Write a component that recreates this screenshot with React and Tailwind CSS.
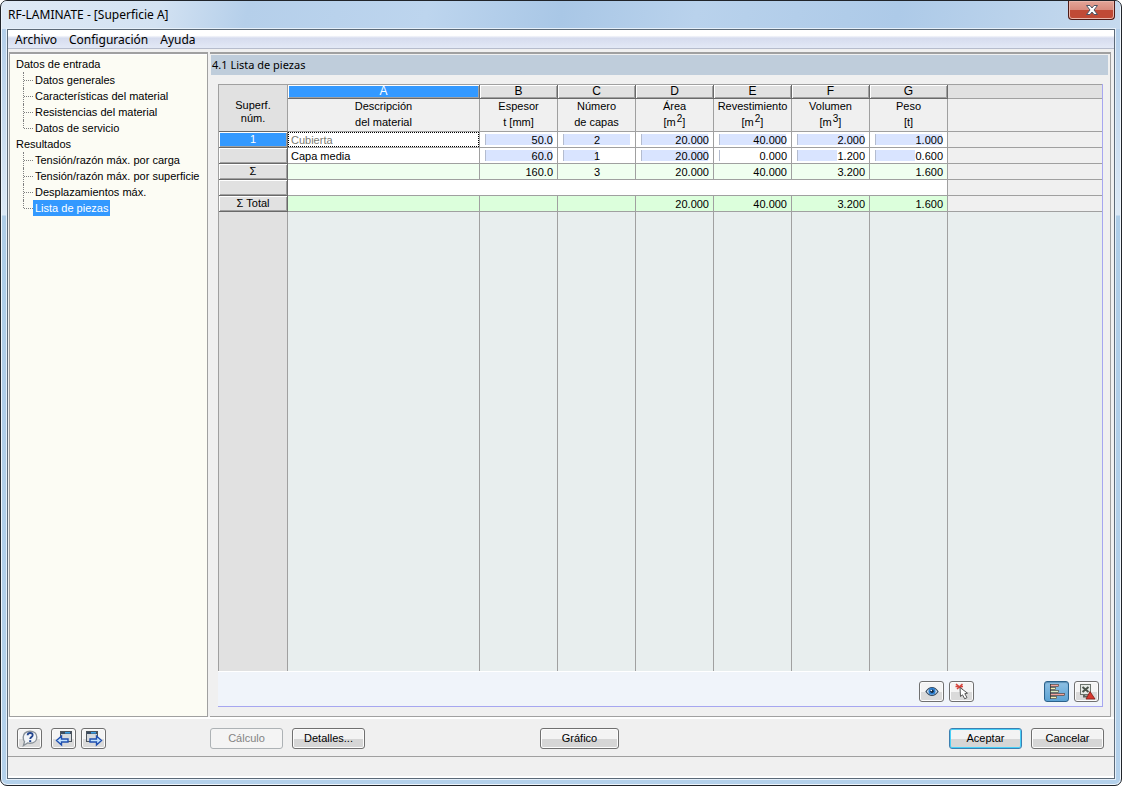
import React, { useState } from 'react';
import { clsx } from 'clsx';

const TREE = [
  {
    title: 'Datos de entrada',
    items: ['Datos generales', 'Características del material', 'Resistencias del material', 'Datos de servicio'],
  },
  {
    title: 'Resultados',
    items: [
      'Tensión/razón máx. por carga',
      'Tensión/razón máx. por superficie',
      'Desplazamientos máx.',
      'Lista de piezas',
    ],
  },
];

const COLUMNS = [
  { letter: 'A', top: 'Descripción', bottom: 'del material' },
  { letter: 'B', top: 'Espesor', bottom: 't [mm]' },
  { letter: 'C', top: 'Número', bottom: 'de capas', center: true },
  { letter: 'D', top: 'Área', bottom: '[m', sup: '2' },
  { letter: 'E', top: 'Revestimiento', bottom: '[m', sup: '2' },
  { letter: 'F', top: 'Volumen', bottom: '[m', sup: '3' },
  { letter: 'G', top: 'Peso', bottom: '[t]' },
];

const ROWS = [
  { head: '1', cells: ['Cubierta', '50.0', '2', '20.000', '40.000', '2.000', '1.000'], bars: [100, 100, 100, 100, 100, 100] },
  { head: '', cells: ['Capa media', '60.0', '1', '20.000', '0.000', '1.200', '0.600'], bars: [100, 50, 100, 0, 60, 60] },
  { head: 'Σ', cells: ['', '160.0', '3', '20.000', '40.000', '3.200', '1.600'], tone: 'bg-[#f0fff0]' },
  { head: '', blank: true },
  { head: 'Σ Total', cells: ['', '', '', '20.000', '40.000', '3.200', '1.600'], tone: 'bg-[#dcffdc]' },
];

const BEVEL =
  'border-r border-b border-[#696969] shadow-[inset_1px_1px_0_#ffffff,inset_-1px_-1px_0_#a0a0a0]';
const LINE = 'border-r border-b border-[#a0a0a0]';

const HelpIcon = () => (
  <svg width="18" height="17" viewBox="0 0 18 17">
    <path d="M9 1.2c4 0 6.8 2.5 6.8 6s-2.8 6-6.8 6c-.9 0-1.700-.1-2.400-.3L2.500 15.500l1-3.900C2.600 10.500 2.200 8.900 2.200 7.200c0-3.500 2.800-6 6.800-6z" fill="#f3f6f9" stroke="#8a9299" strokeWidth="1.400" />
    <path d="M6.600 5.300C6.700 3.600 8 3 9.200 3c1.500 0 2.500.8 2.500 2 0 2-2.500 2.100-2.500 4.100" fill="none" stroke="#24468f" strokeWidth="1.800" />
    <rect x="8.200" y="10.200" width="2" height="1.800" fill="#24468f" />
  </svg>
);

const PageIcon = ({ forward }) => (
  <svg width="18" height="17" viewBox="0 0 18 17">
    <rect x={forward ? 1.5 : 5.5} y="1.500" width="11" height="10" fill="#d6dade" stroke="#4c545c" />
    <rect x={forward ? 2 : 6} y="2" width="10" height="2" fill="#3c4c60" />
    <rect x={forward ? 6 : 10} y="2" width="5" height="1.500" fill="#3aa0e8" />
    <path
      d={forward ? 'M16.500 10.500l-5-4.500v3H5v3h6.500v3z' : 'M1.500 10.500l5-4.500v3h6.500v3H6.500v3z'}
      fill="#c4e4ff"
      stroke="#1f4fb0"
      strokeWidth="1.400"
    />
  </svg>
);

const EyeIcon = () => (
  <svg width="18" height="17" viewBox="0 0 18 17">
    <path d="M3 8.500C5 5.500 7 4.500 9 4.500s4 1 6 4C13 11.500 11 12.500 9 12.500s-4-1-6-4z" fill="#cfdfee" stroke="#33475c" strokeWidth="1.200" />
    <circle cx="9" cy="8.300" r="3.500" fill="#2c7fd0" />
    <circle cx="9" cy="8.300" r="1.700" fill="#10253c" />
    <circle cx="8.300" cy="7.500" r=".8" fill="#fff" />
  </svg>
);

const PickIcon = () => (
  <svg width="18" height="17" viewBox="0 0 18 17">
    <path d="M3 1l6 5M9.500 1L4 6M2.500 3.500H10" stroke="#d6453d" strokeWidth="1.600" />
    <path d="M7 4.500l.5 9 2-1.700 2.200 4 2.300-1.200-2.200-3.900 2.700-.5z" fill="#fff" stroke="#555" />
  </svg>
);

const ChartIcon = () => (
  <svg width="20" height="17" viewBox="0 0 20 17">
    <path d="M3.500 1v15" stroke="#1c3550" />
    <rect x="3.500" y="1.500" width="8" height="2" fill="#f3a29b" stroke="#43372f" strokeWidth=".6" />
    <rect x="3.500" y="4.500" width="5" height="2" fill="#f2f0b4" stroke="#43372f" strokeWidth=".6" />
    <rect x="3.500" y="7.500" width="8" height="2" fill="#d8ecc4" stroke="#43372f" strokeWidth=".6" />
    <rect x="3.500" y="10.500" width="14" height="2" fill="#f3a29b" stroke="#43372f" strokeWidth=".6" />
    <rect x="3.500" y="13.500" width="6" height="2" fill="#f2f0b4" stroke="#43372f" strokeWidth=".6" />
  </svg>
);

const ExcelIcon = () => (
  <svg width="20" height="17" viewBox="0 0 20 17">
    <path d="M6 13.500h7M7 11v3" stroke="#5d625d" strokeWidth="2" />
    <rect x="3.500" y="1.500" width="10" height="10" fill="#e6eae6" stroke="#6c736c" />
    <path d="M5.500 4l6 5M11.500 4l-6 5" stroke="#4a534a" strokeWidth="2" />
    <path d="M9 16l4-7.500L18 16z" fill="#d8382e" stroke="#7e1c17" strokeWidth=".8" />
  </svg>
);

const IconButton = ({ label, active, children }) => (
  <button
    aria-label={label}
    className={clsx(
      'flex h-[21px] w-[25px] items-center justify-center rounded-[3px] border bg-linear-to-b',
      active
        ? 'border-[#2c628b] from-[#8fc0e4] to-[#5ba3d4] shadow-[inset_0_1px_1px_#5b8fb5]'
        : 'border-[#707070] from-[#f4f4f4] from-50% to-[#dadada] to-50% shadow-[inset_0_0_0_1px_#fcfcfc]'
    )}
  >
    {children}
  </button>
);

const TextButton = ({ children, disabled, primary, className }) => (
  <button
    disabled={disabled}
    className={clsx(
      'h-[21px] rounded-[3px] border text-center leading-4',
      disabled && 'border-[#adb2b5] bg-[#f4f4f4] text-[#838383]',
      !disabled && 'bg-linear-to-b from-[#f3f3f3] from-50% to-[#d6d6d6] to-50%',
      !disabled && (primary
        ? 'border-[#3c7fb1] shadow-[inset_0_0_0_1px_#48d0f8]'
        : 'border-[#707070] shadow-[inset_0_0_0_1px_#fcfcfc]'),
      className
    )}
  >
    {children}
  </button>
);

const ValueCell = ({ value, bar, center, tone }) => (
  <td className={clsx(LINE, 'p-0', tone || 'bg-white')}>
    <div className="grid items-center pr-1 pl-[5px]">
      {bar !== undefined && (
        <div className="col-start-1 row-start-1 mr-px">
          <div className="h-[11px] min-w-px border-l border-[#b4bccf] bg-[#d9e4ff]" style={{ width: `${bar}%` }} />
        </div>
      )}
      <span className={clsx('col-start-1 row-start-1 pt-px leading-[14px]', center ? 'text-center' : 'text-right')}>
        {value}
      </span>
    </div>
  </td>
);

const PartsTable = () => (
  <table className="h-full w-full table-fixed border-separate border-spacing-0 border-t border-l border-[#a0a0a0]">
    <colgroup>
      <col className="w-[69px]" />
      <col className="w-[192px]" />
      <col className="w-[78px]" />
      <col className="w-[78px]" />
      <col className="w-[78px]" />
      <col className="w-[78px]" />
      <col className="w-[78px]" />
      <col className="w-[78px]" />
      <col />
    </colgroup>
    <thead>
      <tr className="h-[14px]">
        <th rowSpan={2} className="border-r border-b border-[#a0a0a0] border-b-[#696969] bg-[#e1e1e1] p-0 pt-2 leading-[13px] font-normal">
          Superf.
          <br />
          núm.
        </th>
        {COLUMNS.map((col) => (
          <th
            key={col.letter}
            className={clsx(
              BEVEL,
              'p-0 text-[12px] leading-[13px] font-normal',
              col.letter === 'A' ? 'bg-[#3399ff] text-white' : 'bg-[#e1e1e1]'
            )}
          >
            {col.letter}
          </th>
        ))}
        <td className="border-b border-[#a0a0a0] bg-[#e1e1e1] p-0" />
      </tr>
      <tr className="h-[33px]">
        {COLUMNS.map((col) => (
          <th key={col.letter} className={clsx(LINE, 'bg-[#f0f0f0] p-0 align-top leading-4 font-normal whitespace-nowrap')}>
            <div className="h-4 leading-[15px]">{col.top}</div>
            <div className="h-4 leading-[15px]">
              {col.bottom}
              {col.sup && (
                <>
                  <sup className="top-[-4px] pl-px text-[10px] leading-none">{col.sup}</sup>]
                </>
              )}
            </div>
          </th>
        ))}
        <td className="border-b border-[#a0a0a0] bg-[#f0f0f0] p-0" />
      </tr>
    </thead>
    <tbody>
      {ROWS.map((row, r) => (
        <tr key={r} className="h-4">
          <th
            className={clsx(
              BEVEL,
              'p-0 leading-[15px] font-normal',
              r === 0 ? 'bg-[#3399ff] text-white' : 'bg-[#e1e1e1]'
            )}
          >
            {row.head}
          </th>
          {row.blank ? (
            <td colSpan={7} className={clsx(LINE, 'bg-white p-0')} />
          ) : (
            <>
              <td className={clsx(LINE, 'p-0', row.tone || 'bg-white')}>
                <div
                  className={clsx(
                    'h-[15px] leading-[14px]',
                    r === 0 ? 'border border-dotted border-black pl-[2px] text-[#7b7b72]' : 'pt-px pl-[3px]'
                  )}
                >
                  {row.cells[0]}
                </div>
              </td>
              {row.cells.slice(1).map((value, i) => (
                <ValueCell key={i} value={value} bar={row.bars?.[i]} center={COLUMNS[i + 1].center} tone={row.tone} />
              ))}
            </>
          )}
          <td className="border-b border-[#a0a0a0] bg-[#f0f0f0] p-0" />
        </tr>
      ))}
      <tr>
        <td className="border-r border-[#a0a0a0] bg-[#e1e1e1]" />
        {COLUMNS.map((col) => (
          <td key={col.letter} className="border-r border-[#a0a0a0] bg-[#e8eeee]" />
        ))}
        <td className="bg-[#e8eeee]" />
      </tr>
    </tbody>
  </table>
);

const Navigator = () => {
  const [selected, setSelected] = useState('Lista de piezas');

  return (
    <nav className="w-[199px] shrink-0 border border-t-2 border-[#a0a0a0] bg-[#fcfcf4] pt-[2px] shadow-[inset_0_1px_0_#ffffff]">
      {TREE.map((group) => (
        <div key={group.title}>
          <div className="h-4 pl-[6px] leading-4">{group.title}</div>
          <ul>
            {group.items.map((item, i) => (
              <li key={item} className="flex h-4 pl-[13px]">
                <span
                  className={clsx(
                    'w-px border-l border-dotted border-[#808080]',
                    i === group.items.length - 1 ? 'h-2' : 'h-4'
                  )}
                />
                <span className="h-[9px] w-[9px] border-b border-dotted border-[#808080]" />
                <button
                  onClick={() => setSelected(item)}
                  className={clsx('px-[2px] leading-4 whitespace-nowrap', selected === item && 'bg-[#3399ff] text-white')}
                >
                  {item}
                </button>
              </li>
            ))}
          </ul>
        </div>
      ))}
    </nav>
  );
};

const App = () => (
  <div className="flex h-screen min-h-[480px] flex-col overflow-hidden rounded-[7px] border border-[#20242a] bg-[linear-gradient(#c3d8ee_0,#b4cfea_30px,#dce9f6_214px,#aecde8_215px,#b4d1eb_100%)] px-[6px] pb-[6px] font-['Liberation_Sans',Arial,sans-serif] text-[11px] text-black shadow-[inset_0_0_0_1px_#eef5fc]">
    <header className="-mx-[5px] flex h-7 shrink-0 items-start justify-between bg-[linear-gradient(100deg,#dfeaf6_0,#d3e2f2_14%,#b5cfea_22%,#bdd5ee_38%,#a9c7e6_50%,#b9d2ec_62%,#adcae8_80%,#c6daee_100%)] pl-[6px]">
      <h1 className="pt-[6px] font-['Noto_Sans',sans-serif] text-[12px] leading-4">RF-LAMINATE - [Superficie A]</h1>
      <button
        aria-label="Cerrar"
        className="mr-[5px] flex h-[19px] w-[47px] items-center justify-center rounded-b-[4px] border border-t-0 border-[#4d1a16] bg-linear-to-b from-[#e3a598] from-0% via-[#d88a7c] via-50% to-[#c04a36] to-50% shadow-[inset_0_0_0_1px_#e9b5aa]"
      >
        <svg width="14" height="12" viewBox="0 0 14 12">
          <path d="M1.500 1.500h3.500l2 2.500 2-2.500h3.500L9 6l3.500 4.500H9L7 8l-2 2.500H1.500L5 6z" fill="#fff" stroke="#4b5565" />
        </svg>
      </button>
    </header>

    <div className="flex min-h-0 flex-1 flex-col border border-[#5c6a78] bg-[#f0f0f0] shadow-[0_0_0_1px_#e6f0fa]">
      <div className="flex h-[19px] shrink-0 items-center gap-3 border-b border-[#b6bccc] bg-linear-to-b from-white from-30% via-[#d6dcee] via-45% to-[#e3e9f6] pt-[2px] pl-[7px] font-['Noto_Sans',sans-serif] text-[12px]">
        {['Archivo', 'Configuración', 'Ayuda'].map((item) => (
          <button key={item} className="leading-4">
            {item}
          </button>
        ))}
      </div>

      <div className="flex min-h-0 flex-1 gap-[2px] border-b-2 border-white pt-[3px] pr-[3px] pl-px">
        <Navigator />
        <main className="flex min-w-0 flex-1 flex-col border-t-2 border-r border-b border-[#a0a0a0]">
          <h2 className="mt-px mr-[2px] ml-px h-5 shrink-0 bg-[#bfcddb] pl-px font-['Noto_Sans',sans-serif] text-[11px] leading-5">
            4.1 Lista de piezas
          </h2>
          <section className="mt-[9px] mr-[7px] mb-[9px] ml-2 flex min-h-0 flex-1 flex-col border-r border-b border-[#a6a6f0] bg-[#f0f4fa]">
            <div className="grid min-h-0 flex-1">
              <PartsTable />
            </div>
            <div className="flex h-[35px] shrink-0 items-center gap-[5px] border-t border-white pt-[5px] pr-[3px]">
              <span className="flex-1" />
              <IconButton label="Ver">
                <EyeIcon />
              </IconButton>
              <IconButton label="Seleccionar">
                <PickIcon />
              </IconButton>
              <span className="w-[60px]" />
              <IconButton label="Mostrar barras" active>
                <ChartIcon />
              </IconButton>
              <IconButton label="Exportar a Excel">
                <ExcelIcon />
              </IconButton>
            </div>
          </section>
        </main>
      </div>

      <div className="flex h-[38px] shrink-0 items-center border-b border-[#a0a0a0] pr-[10px] pl-[9px] pt-px">
        <IconButton label="Ayuda del módulo">
          <HelpIcon />
        </IconButton>
        <div className="ml-[9px] flex gap-[5px]">
          <IconButton label="Anterior">
            <PageIcon />
          </IconButton>
          <IconButton label="Siguiente">
            <PageIcon forward />
          </IconButton>
        </div>
        <div className="ml-[104px] flex gap-[9px]">
          <TextButton disabled className="w-[73px]">
            Cálculo
          </TextButton>
          <TextButton className="w-[73px]">Detalles...</TextButton>
        </div>
        <TextButton className="ml-[175px] w-[79px]">Gráfico</TextButton>
        <div className="ml-auto flex gap-[9px]">
          <TextButton primary className="w-[73px]">
            Aceptar
          </TextButton>
          <TextButton className="w-[73px]">Cancelar</TextButton>
        </div>
      </div>
      <footer className="h-[21px] shrink-0 border-b-2 border-white" />
    </div>
  </div>
);

export default App;
